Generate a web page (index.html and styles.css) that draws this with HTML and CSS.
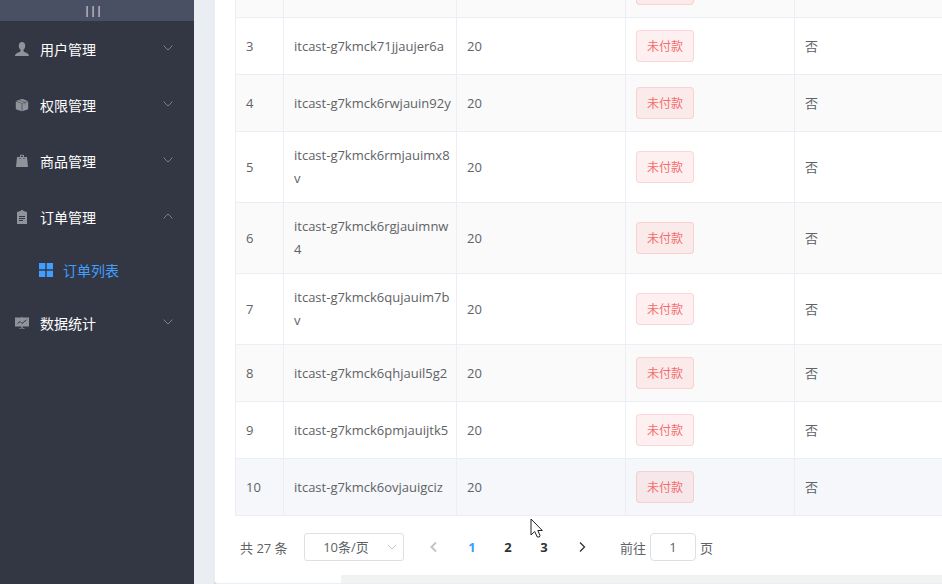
FILE: index.html
```html
<!DOCTYPE html>
<html lang="zh-CN">
<head>
<meta charset="utf-8">
<title>订单列表</title>
<link rel="stylesheet" href="styles.css">
</head>
<body>
<div class="layout">
  <aside class="sidebar">
    <button class="toggle" type="button">|||</button>
    <nav class="menu">
      <a class="item" href="#users">
        <svg class="icon" viewBox="0 0 14 14"><path d="M7 0C4.900 0 3.800 1.500 3.800 3.700C3.800 5.500 4.500 7 5.500 7.800V9.300C5.500 10.300 0 10.800 0 14H14C14 10.800 8.500 10.300 8.500 9.300V7.800C9.500 7 10.200 5.500 10.200 3.700C10.200 1.500 9.100 0 7 0Z"/></svg>
        <span>用户管理</span>
        <svg class="arrow" viewBox="0 0 12 6"><path d="M1.500 .5L6 5L10.500 .5"/></svg>
      </a>
      <a class="item" href="#rights">
        <svg class="icon" viewBox="0 0 14 14"><path d="M1 3L6.500 1L7.500 1L13 3L7 5.200ZM.8 3.500L6.700 5.600V13.200L1.500 11.600Q.8 11.300 .8 10.500ZM13.200 3.500L7.300 5.600V13.200L12.500 11.600Q13.200 11.300 13.200 10.500Z"/><path class="seam thin" d="M4 2L10 4.300V6.500"/></svg>
        <span>权限管理</span>
        <svg class="arrow" viewBox="0 0 12 6"><path d="M1.500 .5L6 5L10.500 .5"/></svg>
      </a>
      <a class="item" href="#goods">
        <svg class="icon" viewBox="0 0 14 14"><path fill-rule="evenodd" d="M5 3V1.500Q5 .8 5.700 .8H8.300Q9 .8 9 1.500V3H12L13 13H1L2 3ZM6 3H8V1.800H6ZM4.500 4V5H5.500V4ZM8.500 4V5H9.500V4Z"/></svg>
        <span>商品管理</span>
        <svg class="arrow" viewBox="0 0 12 6"><path d="M1.500 .5L6 5L10.500 .5"/></svg>
      </a>
      <a class="item" href="#orders">
        <svg class="icon" viewBox="0 0 14 14"><path fill-rule="evenodd" d="M2 1.700H4.300V1H5.500Q5.700 0 7 0Q8.300 0 8.500 1H9.700V1.700H12V14H2ZM4 6V7H10V6ZM4 8V9H10V8ZM4 10V11H8V10Z"/></svg>
        <span>订单管理</span>
        <svg class="arrow" viewBox="0 0 12 6"><path d="M1.500 5.500L6 1L10.500 5.500"/></svg>
      </a>
      <a class="item sub" href="#list">
        <svg class="icon" viewBox="0 0 14 14"><path d="M0 0H6.300V6.300H0ZM7.700 0H14V6.300H7.700ZM0 7.700H6.300V14H0ZM7.700 7.700H14V14H7.700Z"/></svg>
        <span>订单列表</span>
      </a>
      <a class="item" href="#stats">
        <svg class="icon" viewBox="0 0 14 14"><path d="M0 1.500H6.500V.8H7.500V1.500H14V10.500H0ZM6.400 10.500H7.600V11.700L10.300 13H8.500L7 12.300L5.500 13H3.700L6.400 11.700Z"/><path class="seam" d="M2.500 7.500L5 5.500L7 7.500L11.500 3.800"/></svg>
        <span>数据统计</span>
        <svg class="arrow" viewBox="0 0 12 6"><path d="M1.500 .5L6 5L10.500 .5"/></svg>
      </a>
    </nav>
  </aside>
  <main class="main">
    <section class="card">
      <table class="orders">
        <colgroup><col class="c-index"><col class="c-code"><col class="c-price"><col class="c-price"><col></colgroup>
        <tbody>
          <tr><td></td><td></td><td></td><td><span class="tag"></span></td><td></td></tr>
          <tr><td>3</td><td>itcast-g7kmck71jjaujer6a</td><td>20</td><td><span class="tag">未付款</span></td><td>否</td></tr>
          <tr><td>4</td><td>itcast-g7kmck6rwjauin92y</td><td>20</td><td><span class="tag">未付款</span></td><td>否</td></tr>
          <tr><td>5</td><td>itcast-g7kmck6rmjauimx8<br>v</td><td>20</td><td><span class="tag">未付款</span></td><td>否</td></tr>
          <tr><td>6</td><td>itcast-g7kmck6rgjauimnw<br>4</td><td>20</td><td><span class="tag">未付款</span></td><td>否</td></tr>
          <tr><td>7</td><td>itcast-g7kmck6qujauim7b<br>v</td><td>20</td><td><span class="tag">未付款</span></td><td>否</td></tr>
          <tr><td>8</td><td>itcast-g7kmck6qhjauil5g2</td><td>20</td><td><span class="tag">未付款</span></td><td>否</td></tr>
          <tr><td>9</td><td>itcast-g7kmck6pmjauijtk5</td><td>20</td><td><span class="tag">未付款</span></td><td>否</td></tr>
          <tr class="hovered"><td>10</td><td>itcast-g7kmck6ovjauigciz</td><td>20</td><td><span class="tag">未付款</span></td><td>否</td></tr>
        </tbody>
      </table>
      <div class="pagination">
        <span class="total">共 27 条</span>
        <span class="sizes">
          <select aria-label="每页条数"><option>10条/页</option></select>
          <svg class="caret" viewBox="0 0 12 6"><path d="M2 1L6 5L10 1"/></svg>
        </span>
        <div class="pager">
          <button class="step" type="button" disabled aria-label="上一页"><svg viewBox="0 0 12 12"><path d="M8 1.500L3.500 6L8 10.500"/></svg></button>
          <button class="page current" type="button">1</button>
          <button class="page" type="button">2</button>
          <button class="page" type="button">3</button>
          <button class="step" type="button" aria-label="下一页"><svg viewBox="0 0 12 12"><path d="M4 1.500L8.500 6L4 10.500"/></svg></button>
        </div>
        <label class="jump">前往<input type="text" value="1">页</label>
      </div>
      <div class="scroll-track"></div>
    </section>
  </main>
</div>
<svg class="cursor" viewBox="0 0 13 20"><path d="M1 1V17L4.700 13.500L7.300 19H9.300L10 17.500L7.800 12.500H12.300Z"/></svg>
</body>
</html>
```
FILE: styles.css
```css
* { box-sizing: border-box; }
body {
  margin: 0;
  font-family: "Open Sans", "Noto Sans CJK SC", sans-serif;
  font-size: 13px;
  color: #606266;
}
button, input, select { font: inherit; color: inherit; }
.layout { display: flex; height: 100vh; overflow: hidden; }

.sidebar { flex: 0 0 194px; background: #333744; }
.toggle {
  display: block;
  width: 100%;
  height: 21px;
  padding: 0 8px 2px 0;
  border: 0;
  background: #4a5064;
  color: #fff;
  font-size: 11px;
  line-height: 19px;
  text-align: center;
}
.item {
  display: flex;
  align-items: center;
  height: 56px;
  padding: 0 20px 0 15px;
  color: #fff;
  font-family: "Noto Sans CJK SC", sans-serif;
  font-size: 14px;
  text-decoration: none;
}
.icon { width: 14px; height: 14px; margin-right: 11px; fill: #909399; }
.seam { fill: none; stroke: #333744; }
.seam.thin { stroke-width: .4; }
.arrow {
  width: 12px;
  height: 6px;
  margin: 0 0 2px auto;
  fill: none;
  stroke: #7c808a;
}
.sub { height: 50px; padding-left: 39px; color: #409eff; }
.sub .icon { margin-right: 10px; fill: #409eff; }

.main {
  flex: 1;
  min-width: 0;
  display: flex;
  flex-direction: column;
  justify-content: flex-end;
  padding-left: 20px;
  background: #eaedf1;
}
.card {
  position: relative;
  padding: 20px 0 20px 20px;
  border: 1px solid #ebeef5;
  border-right: 0;
  border-radius: 4px 0 0 4px;
  background: #fff;
  box-shadow: 0 1px 1px rgba(0, 0, 0, .15);
}

.orders {
  width: 100%;
  table-layout: fixed;
  border-collapse: separate;
  border-spacing: 0;
  border-left: 1px solid #ebeef5;
}
.c-index { width: 48px; }
.c-code { width: 173px; }
.c-price { width: 169px; }
.orders td {
  padding: 12px 10px;
  border-right: 1px solid #ebeef5;
  border-bottom: 1px solid #ebeef5;
  line-height: 23px;
  white-space: nowrap;
}
.orders td:last-child { border-right: 0; }
.orders tr:nth-child(odd) { background: #fafafa; }
.orders tr:nth-child(even) { background: #fff; }
.orders tr.hovered { background: #f5f7fa; }
.tag {
  display: block;
  width: 58px;
  height: 32px;
  border: 1px solid rgba(245, 108, 108, .2);
  border-radius: 4px;
  background: #fef0f0;
  color: #f56c6c;
  font-size: 12px;
  line-height: 32px;
  text-align: center;
}
.orders tr:nth-child(odd) .tag { background: #faeaea; }
.orders tr.hovered .tag { background: #f5e7ea; }

.pagination {
  display: flex;
  align-items: center;
  margin-top: 15px;
  padding: 2px 5px;
}
.total { width: 64px; }
.sizes { position: relative; width: 100px; }
.sizes select {
  display: block;
  width: 100%;
  height: 28px;
  padding: 0 16px 0 0;
  border: 1px solid #dcdfe6;
  border-radius: 3px;
  appearance: none;
  background: #fff;
  text-align: center;
  text-align-last: center;
}
.caret {
  position: absolute;
  top: 11px;
  right: 6px;
  width: 12px;
  height: 6px;
  fill: none;
  stroke: #c0c4cc;
}
.pager { display: flex; margin: 0 18px 0 10px; }
.pager button {
  display: flex;
  align-items: center;
  justify-content: center;
  height: 28px;
  padding: 0;
  border: 0;
  background: none;
  color: #303133;
  font-weight: 700;
}
.pager .step { width: 40px; }
.pager .page { width: 36px; }
.pager .current { color: #409eff; }
.step svg { width: 12px; height: 12px; fill: none; stroke: #303133; stroke-width: 1.3; }
.step:disabled svg { stroke: #c0c4cc; stroke-width: 2; }
.jump { display: flex; align-items: center; }
.jump input {
  width: 46px;
  height: 28px;
  margin: 0 4px;
  padding: 0;
  border: 1px solid #dcdfe6;
  border-radius: 4px;
  text-align: center;
}
.scroll-track {
  position: absolute;
  right: 0;
  bottom: 0;
  left: 126px;
  height: 8px;
  background: #f2f2f2;
}
.cursor {
  position: absolute;
  top: 518px;
  left: 530px;
  width: 13px;
  height: 20px;
  fill: #fff;
  stroke: #222;
}
```
